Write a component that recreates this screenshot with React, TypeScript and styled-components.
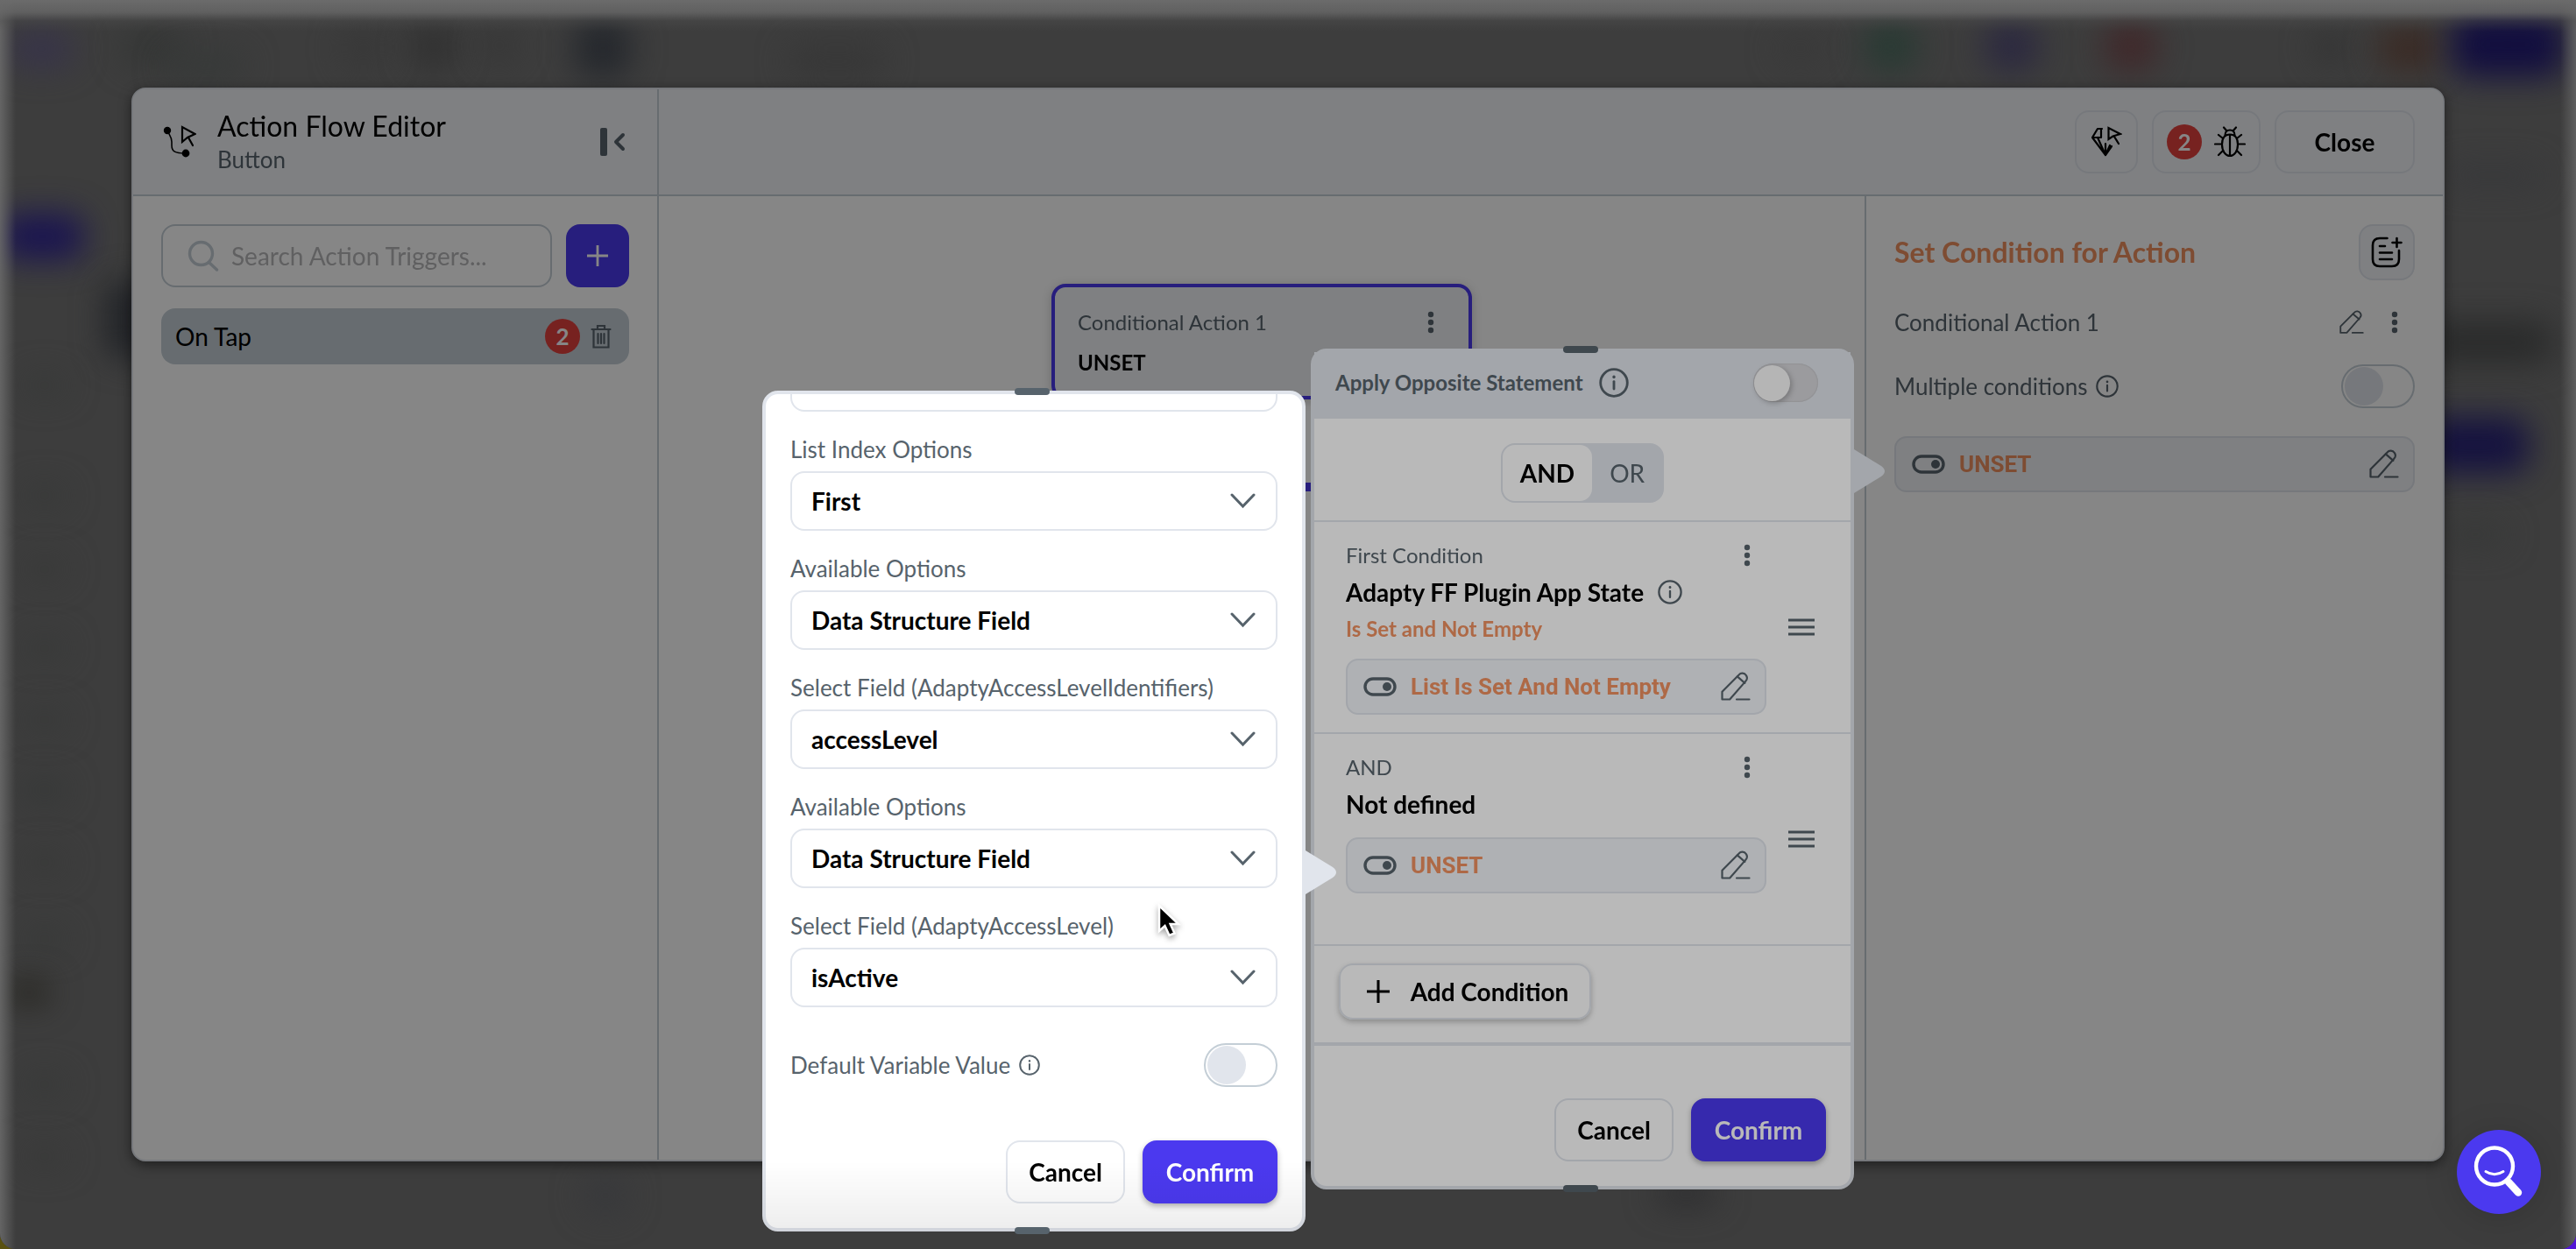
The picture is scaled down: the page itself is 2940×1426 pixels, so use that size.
import React, { useId } from "react";
import styled, { createGlobalStyle, css } from "styled-components";

const c = {
  surface: "#ffffff",
  header: "#f1f4f8",
  line: "#c4ced6",
  soft: "#e1e5ec",
  text: "#000000",
  muted: "#57636c",
  primary: "#4b39ef",
  orange: "#f09160",
  red: "#e3413d",
};

const Global = createGlobalStyle`
  *, *::before, *::after { box-sizing: border-box; }
  body {
    margin: 0;
    background: linear-gradient(90deg, #5a5210 50%, #5316d6 50%);
    font-family: Lato, "Open Sans", sans-serif;
    font-size: 28px;
    line-height: 36px;
    color: ${c.text};
  }
  button, input, select { font: inherit; color: inherit; margin: 0; }
  button { cursor: pointer; }
  h1, h2, h3, p { margin: 0; }
`;

/* ---------- shell ---------- */

const Page = styled.div`
  position: relative;
  display: flex;
  min-height: 100vh;
  padding: 100px 150px;
  overflow: hidden;
  border-radius: 0 0 18px 18px;
  background: #3e3e3e;
`;

const Backdrop = styled.div`
  position: absolute;
  inset: 0;
  background: #3d3d3d;
`;

const EdgeLight = styled.div`
  position: absolute;
  inset: 0;
  background:
    linear-gradient(180deg, #6b6b6b 0, rgba(102, 102, 102, 0.85) 14px, rgba(80, 80, 80, 0.35) 24px, rgba(62, 62, 62, 0) 36px),
    linear-gradient(90deg, rgba(110, 110, 110, 0.8) 0, rgba(62, 62, 62, 0) 18px),
    linear-gradient(270deg, rgba(110, 110, 110, 0.7) 0, rgba(62, 62, 62, 0) 18px);
`;

const Glow = styled.span<{ $x: string; $y: number; $w: number; $h: number; $color: string }>`
  position: absolute;
  left: ${(p) => p.$x};
  top: ${(p) => p.$y}px;
  width: ${(p) => p.$w}px;
  height: ${(p) => p.$h}px;
  border-radius: 20px;
  background: ${(p) => p.$color};
  filter: blur(18px);
`;

/* ---------- shared controls ---------- */

const Row = styled.div<{ $gap?: number; $h?: number; $end?: number }>`
  display: flex;
  align-items: center;
  gap: ${(p) => p.$gap ?? 0}px;
  min-height: ${(p) => p.$h ?? 0}px;
  padding-right: ${(p) => p.$end ?? 0}px;
`;

const Spacer = styled.span`
  flex: 1;
`;

const Text = styled.span<{ $size?: number; $weight?: number; $color?: string }>`
  font-size: ${(p) => p.$size ?? 28}px;
  font-weight: ${(p) => p.$weight ?? 400};
  color: ${(p) => p.$color ?? c.text};
  white-space: nowrap;
`;

const ValueText = styled(Text)`
  font-family: Roboto, Lato, sans-serif;
  font-size: 26px;
  font-weight: 700;
  color: ${c.orange};
`;

const Plain = styled.button`
  display: inline-flex;
  align-items: center;
  justify-content: center;
  padding: 0;
  border: 0;
  background: none;
  color: ${c.muted};
`;

const Outline = styled.button<{ $w?: number; $h?: number; $fill?: string }>`
  flex: none;
  display: inline-flex;
  align-items: center;
  justify-content: center;
  gap: 14px;
  min-width: ${(p) => p.$w ?? 72}px;
  height: ${(p) => p.$h ?? 72}px;
  padding: 0 12px;
  border: 2px solid ${c.soft};
  border-radius: 16px;
  background: ${(p) => p.$fill ?? "transparent"};
  font-weight: 700;
`;

const Primary = styled(Outline)<{ $flat?: boolean }>`
  border: 0;
  background: ${c.primary};
  color: #fff;
  box-shadow: ${(p) => (p.$flat ? "none" : "0 3px 6px rgba(0, 0, 0, 0.3)")};
`;

const Badge = styled.span`
  display: inline-flex;
  align-items: center;
  justify-content: center;
  width: 40px;
  height: 40px;
  border-radius: 50%;
  background: ${c.red};
  color: #fff;
  font-size: 26px;
  font-weight: 700;
`;

const Switch = styled.input<{ $filled?: boolean }>`
  appearance: none;
  flex: none;
  display: flex;
  align-items: center;
  width: 84px;
  height: 50px;
  padding: 0 2px;
  border: 2px solid ${c.line};
  border-radius: 25px;
  background: transparent;
  &::before {
    content: "";
    width: 44px;
    height: 44px;
    border-radius: 50%;
    background: ${c.soft};
  }
  ${(p) =>
    p.$filled &&
    css`
      width: 74px;
      height: 44px;
      padding: 0 1px;
      border: 0;
      background: #d6d6da;
      box-shadow: inset 0 0 2px rgba(0, 0, 0, 0.2);
      &::before {
        width: 41px;
        height: 41px;
        background: #fafafa;
        box-shadow: 2px 2px 6px rgba(0, 0, 0, 0.25);
      }
    `}
`;

/* ---------- icons ---------- */

const Svg = styled.svg`
  flex: none;
`;

type IconProps = { w: number; h?: number; box?: string; sw?: number; children: React.ReactNode };
const Icon = ({ w, h = w, box = "0 0 24 24", sw = 2, children }: IconProps) => (
  <Svg
    width={w}
    height={h}
    viewBox={box}
    fill="none"
    stroke="currentColor"
    strokeWidth={sw}
    strokeLinecap="round"
    strokeLinejoin="round"
    aria-hidden="true"
  >
    {children}
  </Svg>
);

const InfoIcon = ({ size = 26 }: { size?: number }) => (
  <Icon w={size} sw={2}>
    <circle cx="12" cy="12" r="10.8" />
    <path d="M12 11v6" />
    <path d="M12 7.2v.2" strokeWidth="2.4" />
  </Icon>
);

const DotsIcon = () => (
  <Icon w={10} h={26} box="0 0 10 26">
    <g fill="currentColor" stroke="none">
      <circle cx="5" cy="4" r="3.2" />
      <circle cx="5" cy="13" r="3.2" />
      <circle cx="5" cy="22" r="3.2" />
    </g>
  </Icon>
);

const PencilIcon = ({ size = 34 }: { size?: number }) => (
  <Icon w={size} box="0 0 34 34" sw={2.2}>
    <path d="M1.500 31.500v-8.800L20.600 3.400a5.200 5.200 0 0 1 8.200.6 5.200 5.200 0 0 1-.4 6.600L10.200 31.500z" />
    <path d="M18.800 5.400l8.600 7.400M18 31.500h14.500" />
  </Icon>
);

const ToggleGlyph = () => (
  <Icon w={38} h={22} box="0 0 38 22" sw={3.4}>
    <rect x="2" y="2" width="34" height="18" rx="9" />
    <circle cx="27" cy="11" r="5" fill="currentColor" stroke="none" />
  </Icon>
);

const PlusIcon = ({ size = 26 }: { size?: number }) => (
  <Icon w={size} h={size} sw={2.8}>
    <path d="M12 0v24M0 12h24" strokeLinecap="butt" />
  </Icon>
);

const FlowIcon = () => (
  <Icon w={38} h={38} box="0 0 38 38" sw={2.2}>
    <path d="M5 6c2 5 5 7 5 13v4c0 7 4 9 15 9" strokeWidth="1.6" />
    <circle cx="5" cy="6" r="4.2" fill="currentColor" stroke="none" />
    <circle cx="26" cy="32" r="4.4" fill="currentColor" stroke="none" />
    <path d="M22 2v17l6-5 8.500-4z" strokeLinejoin="miter" />
    <path d="M29 14l5 9" />
  </Icon>
);

const GemIcon = () => (
  <Icon w={36} h={36} box="0 0 36 36" sw={2.2}>
    <path d="M13 3H8L2 13l15 20 7-10M2 13h10V4M8 13l9 20M17 33V20M17 33l5-11" />
    <path d="M20.500 2v13l5-3.500 8.500-2.500zM27 12l5 8" strokeLinejoin="miter" />
  </Icon>
);

const BugIcon = () => (
  <Icon w={36} h={36} box="0 0 36 36" sw={2.2}>
    <path d="M18 9.500c6 0 9 4 9 11.500s-4 13-9 13-9-5.500-9-13 3-11.500 9-11.500zM18 10v24" />
    <path d="M12.500 10.500c0-4 2.300-6 5.500-6s5.500 2 5.500 6M11 1.500l3.500 4M25 1.500l-3.500 4M1 20.500h8M27 20.500h8M5 10l5 4M31 10l-5 4M5 33l5-5M31 33l-5-5" />
  </Icon>
);

const NoteIcon = () => (
  <Icon w={36} h={36} box="0 0 36 36" sw={2.6}>
    <path d="M18.500 2H10C5 2 2 4.500 2 10v16c0 5.500 3 8 8 8h14c5 0 8-2.500 8-8V16" />
    <path d="M10 11h6M10 18.500h14M10 26h14M29.500 2v10M24.500 7h10" />
  </Icon>
);

const TrashIcon = () => (
  <Icon w={24} h={28} box="0 0 24 28" sw={2.2}>
    <path d="M1.500 6h21M8 5.500V2h8v3.500M3.500 6.500v20h17v-20M8.500 11v11M12 11v11M15.500 11v11" strokeLinejoin="miter" />
  </Icon>
);

const SearchIcon = () => (
  <Icon w={36} h={36} box="0 0 36 36" sw={3.4}>
    <circle cx="15.500" cy="15.500" r="13" />
    <path d="M25 26l8.500 8" />
  </Icon>
);

const CollapseIcon = () => (
  <Icon w={30} h={34} box="0 0 30 34" sw={4}>
    <rect x="1" y="1" width="8" height="32" rx="2" fill="currentColor" stroke="none" />
    <path d="M27 9l-8 8 8 8" />
  </Icon>
);

const GripLines = () => (
  <Icon w={30} h={22} box="0 0 30 22" sw={3}>
    <path d="M0 3h30M0 11h30M0 19h30" strokeLinecap="butt" />
  </Icon>
);

/* ---------- dialog ---------- */

const Dialog = styled.section`
  flex: 1;
  display: grid;
  grid-template-columns: 600px minmax(0, 1fr);
  grid-template-rows: 122px 1fr;
  border: 2px solid ${c.soft};
  border-radius: 16px;
  background: ${c.surface};
  box-shadow: 0 4px 14px rgba(0, 0, 0, 0.5);
  overflow: hidden;
`;

const HeadLeft = styled.header`
  display: flex;
  align-items: center;
  gap: 24px;
  padding: 0 36px 0 34px;
  border-right: 2px solid ${c.line};
  border-bottom: 2px solid ${c.line};
  background: ${c.header};
`;

const Titles = styled.div`
  flex: 1;
  display: flex;
  flex-direction: column;
`;

const Title = styled.h1`
  font-size: 32px;
  line-height: 40px;
  font-weight: 400;
`;

const HeadRight = styled.div`
  display: flex;
  align-items: center;
  justify-content: flex-end;
  gap: 16px;
  padding: 0 32px;
  border-bottom: 2px solid ${c.line};
  background: ${c.header};
`;

const Triggers = styled.aside`
  display: flex;
  flex-direction: column;
  gap: 24px;
  min-width: 0;
  padding: 32px;
  border-right: 2px solid ${c.line};
`;

const SearchBox = styled.label`
  flex: 1;
  min-width: 0;
  display: flex;
  align-items: center;
  gap: 14px;
  height: 72px;
  padding: 0 28px;
  border: 2px solid ${c.line};
  border-radius: 16px;
  color: ${c.line};
`;

const SearchInput = styled.input`
  flex: 1;
  width: 100%;
  min-width: 0;
  padding: 0;
  border: 0;
  outline: 0;
  background: none;
  &::placeholder {
    color: #b6b6b8;
    opacity: 1;
  }
`;

const Trigger = styled.div`
  display: flex;
  align-items: center;
  gap: 12px;
  height: 64px;
  padding: 0 20px 0 16px;
  border-radius: 16px;
  background: ${c.line};
`;

const Workspace = styled.div`
  display: grid;
  grid-template-columns: 1fr 660px;
  min-width: 0;
`;

const Canvas = styled.div`
  display: flex;
  flex-direction: column;
  align-items: center;
  gap: 95px;
  padding-top: 100px;
`;

const Node = styled.article`
  display: flex;
  flex-direction: column;
  gap: 10px;
  width: 480px;
  height: 132px;
  padding: 22px 38px 0 26px;
  border: 4px solid ${c.primary};
  border-radius: 16px;
  background: ${c.header};
  box-shadow: 0 2px 12px rgba(0, 0, 0, 0.2);
`;

const Branch = styled.div`
  width: 480px;
  height: 10px;
  background: ${c.primary};
`;

const Inspector = styled.aside`
  display: flex;
  flex-direction: column;
  gap: 24px;
  padding: 32px;
  border-left: 2px solid ${c.line};
`;

const ValueBox = styled.div<{ $top?: number }>`
  display: flex;
  align-items: center;
  gap: 16px;
  height: 64px;
  margin-top: ${(p) => p.$top ?? 0}px;
  padding: 0 16px 0 18px;
  border: 2px solid ${c.soft};
  border-radius: 14px;
  background: ${c.header};
  color: ${c.muted};
`;

/* ---------- popovers ---------- */

const Popover = styled.section<{ $right: number; $top: number }>`
  position: absolute;
  right: ${(p) => p.$right}px;
  top: ${(p) => p.$top}px;
  display: flex;
  flex-direction: column;
  width: 620px;
  height: 960px;
  border: 4px solid ${c.soft};
  border-radius: 18px;
  background: ${c.surface};
`;

const Grip = styled.span<{ $edge: "top" | "bottom" }>`
  position: absolute;
  left: calc(50% - 22px);
  ${(p) => p.$edge}: -7px;
  width: 40px;
  height: 8px;
  border-radius: 4px;
  background: ${c.muted};
`;

const Pointer = styled.svg<{ $y: number }>`
  position: absolute;
  left: 100%;
  top: ${(p) => p.$y}px;
  width: 40px;
  height: 52px;
  fill: ${c.soft};
`;

const PopHead = styled.header`
  display: flex;
  align-items: center;
  gap: 18px;
  height: 76px;
  padding: 0 37px 6px 24px;
  background: ${c.soft};
  color: ${c.muted};
`;

const Operators = styled.div`
  display: flex;
  justify-content: center;
  padding: 28px 0 20px;
  border-bottom: 2px solid ${c.soft};
`;

const Segments = styled.div`
  display: flex;
  height: 68px;
  padding: 2px;
  border-radius: 16px;
  background: ${c.soft};
`;

const Segment = styled.button<{ $on?: boolean }>`
  padding: 0 20px;
  border: 0;
  border-radius: 14px;
  background: ${(p) => (p.$on ? c.surface : "transparent")};
  color: ${(p) => (p.$on ? c.text : c.muted)};
  font-weight: ${(p) => (p.$on ? 700 : 400)};
`;

const Condition = styled.article`
  display: flex;
  align-items: center;
  height: 242px;
  padding: 0 41px 0 36px;
  border-bottom: 2px solid ${c.soft};
  color: ${c.muted};
`;

const ConditionBody = styled.div`
  display: flex;
  flex-direction: column;
  align-self: stretch;
  width: 480px;
  margin-right: auto;
  padding-top: 20px;
`;

const AddRow = styled.div`
  padding: 20px 28px 26px;
  border-bottom: 4px solid ${c.soft};
`;

const AddButton = styled(Outline)`
  gap: 24px;
  padding: 0 22px 0 28px;
  box-shadow: 0 3px 6px rgba(0, 0, 0, 0.25);
`;

const Actions = styled.footer<{ $push?: boolean }>`
  display: flex;
  justify-content: flex-end;
  gap: 20px;
  margin-top: ${(p) => (p.$push ? "auto" : "0")};
  padding: 0 28px 28px;
`;

const Scroller = styled.div`
  flex: 1;
  min-height: 0;
  display: flex;
  flex-direction: column;
  justify-content: flex-end;
  overflow: hidden;
  padding: 0 28px;
  color: ${c.muted};
`;

const FieldWrap = styled.div`
  flex: none;
  display: grid;
  grid-template-rows: 34px 68px;
  gap: 8px;
  margin-top: 26px;
`;

const FieldLabel = styled.label`
  font-size: 26px;
  line-height: 34px;
`;

const SelectShell = styled.div`
  flex: none;
  display: grid;
  align-items: center;
  color: ${c.muted};
  & > * {
    grid-area: 1 / 1;
  }
  & > svg {
    justify-self: end;
    margin-right: 25px;
    pointer-events: none;
  }
`;

const Select = styled.select`
  appearance: none;
  width: 100%;
  height: 68px;
  padding: 0 64px 0 22px;
  border: 2px solid ${c.soft};
  border-radius: 16px;
  background: ${c.surface};
  color: ${c.text};
  font-weight: 700;
`;

const DefaultRow = styled.div`
  flex: none;
  display: flex;
  align-items: center;
  gap: 10px;
  margin: 41px 0 61px;
`;

const Fade = styled.div`
  position: absolute;
  inset: auto -4px -4px;
  height: 80px;
  border-radius: 0 0 18px 18px;
  background: linear-gradient(180deg, rgba(0, 0, 0, 0), rgba(0, 0, 0, 0.07));
  pointer-events: none;
`;

const Cursor = styled.svg`
  position: absolute;
  right: 1588px;
  top: 1030px;
  width: 34px;
  height: 44px;
  filter: drop-shadow(0 3px 3px rgba(0, 0, 0, 0.35));
`;

const Help = styled.button`
  position: absolute;
  right: 40px;
  bottom: 40px;
  width: 96px;
  height: 96px;
  padding: 0;
  border: 0;
  border-radius: 50%;
  background: ${c.primary};
  color: #fff;
  box-shadow: 0 4px 40px rgba(0, 0, 0, 0.15);
`;

/* Each open popover dims everything underneath it by the same step. */
const DialogShade = styled.div`
  position: relative;
  flex: 1;
  min-width: 0;
  display: flex;
  filter: brightness(0.525);
`;

const PopoverShade = styled.div`
  position: absolute;
  inset: 0;
  filter: brightness(0.725);
`;

const Arrow = ({ y }: { y: number }) => (
  <Pointer $y={y} viewBox="0 0 40 52" aria-hidden="true">
    <path d="M0 1h4l31 19q8 6 0 12L4 51H0z" />
  </Pointer>
);

const Chevron = () => (
  <Icon w={29} h={18} box="0 0 29 18" sw={3}>
    <path d="M2 2l12.500 13L27 2" strokeLinejoin="miter" />
  </Icon>
);

const Field = ({ label, value }: { label: string; value: string }) => {
  const id = useId();
  return (
    <FieldWrap>
      <FieldLabel htmlFor={id}>{label}</FieldLabel>
      <SelectShell>
        <Select id={id} defaultValue={value}>
          <option>{value}</option>
        </Select>
        <Chevron />
      </SelectShell>
    </FieldWrap>
  );
};

const Value = ({ text, top }: { text: string; top?: number }) => (
  <ValueBox $top={top}>
    <ToggleGlyph />
    <ValueText>{text}</ValueText>
    <Spacer />
    <Plain aria-label="Edit"><PencilIcon /></Plain>
  </ValueBox>
);

const glows: [string, number, number, number, string][] = [
  ["10px", 36, 74, 40, "#37334a"],
  ["140px", 34, 70, 40, "#343635"],
  ["190px", 60, 90, 30, "#363938"],
  ["390px", 30, 50, 50, "#383838"],
  ["470px", 28, 50, 50, "#303030"],
  ["550px", 32, 40, 40, "#363636"],
  ["656px", 22, 64, 66, "#25282d"],
  ["900px", 50, 110, 40, "#373737"],
  ["calc(100% - 910px)", 40, 50, 30, "#383838"],
  ["calc(100% - 812px)", 26, 60, 54, "#283a33"],
  ["calc(100% - 674px)", 26, 60, 54, "#2b2840"],
  ["calc(100% - 538px)", 26, 60, 54, "#40282a"],
  ["calc(100% - 300px)", 34, 40, 40, "#333333"],
  ["calc(100% - 226px)", 30, 70, 50, "#3a2a24"],
  ["calc(100% - 142px)", 14, 128, 74, "#120e3f"],
  ["0px", 244, 96, 52, "#1a1450"],
  ["120px", 320, 60, 90, "#222428"],
  ["26px", 430, 50, 20, "#363837"],
  ["26px", 556, 50, 20, "#363837"],
  ["26px", 640, 50, 20, "#373837"],
  ["26px", 730, 50, 20, "#363837"],
  ["26px", 812, 50, 20, "#363837"],
  ["26px", 892, 50, 20, "#333635"],
  ["26px", 975, 50, 20, "#373837"],
  ["26px", 1062, 50, 20, "#363837"],
  ["10px", 1120, 46, 26, "#23221c"],
  ["26px", 1228, 50, 20, "#363837"],
  ["26px", 1310, 50, 20, "#373837"],
  ["calc(100% - 176px)", 476, 122, 64, "#15123f"],
  ["calc(100% - 176px)", 366, 150, 50, "#2a2b2b"],
  ["calc(100% - 150px)", 190, 110, 20, "#36373a"],
  ["calc(100% - 150px)", 600, 70, 20, "#353736"],
  ["1890px", 1350, 70, 26, "#2c2c2e"],
  ["666px", 1345, 50, 40, "#37383b"],
];

function DialogLayer() {
  return (
    <DialogShade>
      <Dialog aria-label="Action Flow Editor">
        <HeadLeft>
          <FlowIcon />
          <Titles>
            <Title>Action Flow Editor</Title>
            <Text $size={26} $color={c.muted}>Button</Text>
          </Titles>
          <Plain aria-label="Collapse panel"><CollapseIcon /></Plain>
        </HeadLeft>
        <HeadRight>
          <Outline aria-label="Inspect"><GemIcon /></Outline>
          <Outline $w={124} aria-label="Issues"><Badge>2</Badge><BugIcon /></Outline>
          <Outline $w={160}>Close</Outline>
        </HeadRight>

        <Triggers>
          <Row $gap={16}>
            <SearchBox>
              <SearchIcon />
              <SearchInput type="text" placeholder="Search Action Triggers..." aria-label="Search Action Triggers" />
            </SearchBox>
            <Primary $flat aria-label="Add trigger"><PlusIcon size={24} /></Primary>
          </Row>
          <Trigger>
            <Text>On Tap</Text>
            <Spacer />
            <Badge>2</Badge>
            <Plain aria-label="Delete"><TrashIcon /></Plain>
          </Trigger>
        </Triggers>

        <Workspace>
          <Canvas>
            <Node>
              <Row>
                <Text $size={24} $color={c.muted}>Conditional Action 1</Text>
                <Spacer />
                <Plain aria-label="More"><DotsIcon /></Plain>
              </Row>
              <Text $size={24} $weight={700}>UNSET</Text>
            </Node>
            <Branch />
          </Canvas>
          <Inspector>
            <Row $h={64}>
              <Text as="h2" $size={32} $weight={700} $color={c.orange}>Set Condition for Action</Text>
              <Spacer />
              <Outline $w={64} $h={64} $fill={c.header} aria-label="Add note"><NoteIcon /></Outline>
            </Row>
            <Row $gap={30} $h={48} $end={18}>
              <Text $size={26} $color={c.muted}>Conditional Action 1</Text>
              <Spacer />
              <Plain aria-label="Rename"><PencilIcon size={28} /></Plain>
              <Plain aria-label="More"><DotsIcon /></Plain>
            </Row>
            <Row $gap={10} $h={50}>
              <Text as="label" htmlFor="multi" $size={26} $color={c.muted}>Multiple conditions</Text>
              <Plain aria-label="About multiple conditions"><InfoIcon /></Plain>
              <Spacer />
              <Switch id="multi" type="checkbox" />
            </Row>
            <Value text="UNSET" top={8} />
          </Inspector>
        </Workspace>
      </Dialog>
    </DialogShade>
  );
}

function ConditionPopover() {
  return (
    <PopoverShade>
      <Popover $right={824} $top={398} aria-label="Conditions">
        <Arrow y={110} />
        <PopHead>
          <Text as="label" htmlFor="opposite" $size={24} $weight={700} $color={c.muted}>Apply Opposite Statement</Text>
          <Plain aria-label="About opposite statement"><InfoIcon size={34} /></Plain>
          <Spacer />
          <Switch id="opposite" type="checkbox" $filled />
        </PopHead>
        <Grip $edge="top" />
        <Operators>
          <Segments>
            <Segment $on>AND</Segment>
            <Segment>OR</Segment>
          </Segments>
        </Operators>
        <Condition>
          <ConditionBody>
            <Row $end={17}>
              <Text $size={24} $color={c.muted}>First Condition</Text>
              <Spacer />
              <Plain aria-label="More"><DotsIcon /></Plain>
            </Row>
            <Row $gap={16} $h={48}>
              <Text $weight={700}>Adapty FF Plugin App State</Text>
              <Plain aria-label="About app state"><InfoIcon size={28} /></Plain>
            </Row>
            <Text $size={24} $weight={700} $color={c.orange}>Is Set and Not Empty</Text>
            <Value text="List Is Set And Not Empty" top={16} />
          </ConditionBody>
          <Plain aria-label="Reorder"><GripLines /></Plain>
        </Condition>
        <Condition>
          <ConditionBody>
            <Row $end={17}>
              <Text $size={24} $color={c.muted}>AND</Text>
              <Spacer />
              <Plain aria-label="More"><DotsIcon /></Plain>
            </Row>
            <Row $h={48}>
              <Text $weight={700}>Not defined</Text>
            </Row>
            <Value text="UNSET" top={14} />
          </ConditionBody>
          <Plain aria-label="Reorder"><GripLines /></Plain>
        </Condition>
        <AddRow>
          <AddButton $w={288} $h={64}><PlusIcon />Add Condition</AddButton>
        </AddRow>
        <Actions $push>
          <Outline $w={136}>Cancel</Outline>
          <Primary $w={154}>Confirm</Primary>
        </Actions>
        <Grip $edge="bottom" />
      </Popover>
    </PopoverShade>
  );
}

function VariablePopover() {
  return (
    <Popover $right={1450} $top={446} aria-label="Variable">
      <Arrow y={520} />
      <Scroller>
        <SelectShell>
          <Select aria-label="Source" />
        </SelectShell>
        <Field label="List Index Options" value="First" />
        <Field label="Available Options" value="Data Structure Field" />
        <Field label="Select Field (AdaptyAccessLevelIdentifiers)" value="accessLevel" />
        <Field label="Available Options" value="Data Structure Field" />
        <Field label="Select Field (AdaptyAccessLevel)" value="isActive" />
        <DefaultRow>
          <Text as="label" htmlFor="fallback" $size={26} $color={c.muted}>Default Variable Value</Text>
          <Plain aria-label="About default value"><InfoIcon size={24} /></Plain>
          <Spacer />
          <Switch id="fallback" type="checkbox" />
        </DefaultRow>
      </Scroller>
      <Actions>
        <Outline $w={136}>Cancel</Outline>
        <Primary $w={154}>Confirm</Primary>
      </Actions>
      <Fade />
      <Grip $edge="top" />
      <Grip $edge="bottom" />
    </Popover>
  );
}

export default function App() {
  return (
    <>
      <Global />
      <Page>
        <Backdrop aria-hidden="true">
          {glows.map(([x, y, w, h, color], i) => (
            <Glow key={i} $x={x} $y={y} $w={w} $h={h} $color={color} />
          ))}
          <EdgeLight />
        </Backdrop>

        <DialogLayer />
        <ConditionPopover />
        <VariablePopover />

        <Help aria-label="Search help">
          <svg width="96" height="96" viewBox="0 0 96 96" fill="none" stroke="#fff" strokeLinecap="round" aria-hidden="true">
            <circle cx="43" cy="41.500" r="21" strokeWidth="4.400" />
            <path d="M33 47.500q10 6.500 20 0" strokeWidth="3" />
            <path d="M59 59.500L70 71.500" strokeWidth="8.500" />
          </svg>
        </Help>
        <Cursor viewBox="0 0 34 44" aria-hidden="true">
          <path d="M5 4v29l6.500-6 5 11 6-2.500-4.800-10.500H27z" fill="#000" stroke="#fff" strokeWidth="2.500" />
        </Cursor>
      </Page>
    </>
  );
}
